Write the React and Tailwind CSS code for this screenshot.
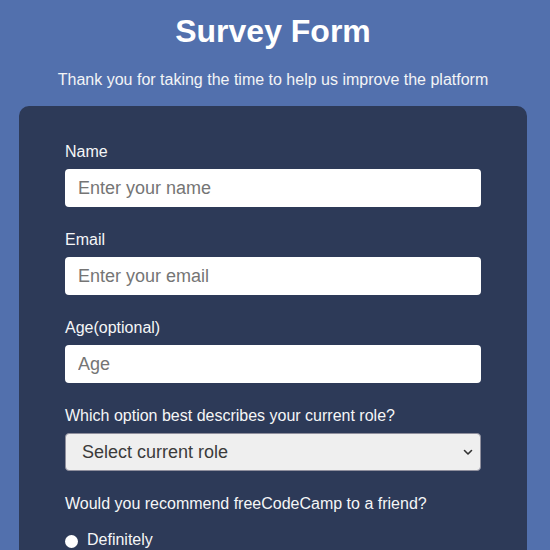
export default function App() {
  return (
    <div className="min-h-[550px] w-full bg-[#5270ad] overflow-hidden" style={{ fontFamily: '"Liberation Sans", Arial, sans-serif' }}>
      <div className="w-[546px]">
        <h1 className="pt-[13px] text-center text-[32px] leading-[37px] font-bold text-white">Survey Form</h1>
        <p className="mt-[21px] text-center text-[16px] leading-[18px] text-[#f3f4f6]">
          Thank you for taking the time to help us improve the platform
        </p>
        <div className="mx-[19px] mt-[17px] rounded-[10px] bg-[#2d3a58] px-[46px] pt-[37px] pb-10">
          <div className="flex flex-col">
            <label className="text-[16px] leading-[18px] text-[#f5f6f7]">Name</label>
            <input
              className="mt-[8px] h-[38px] rounded-[4px] bg-white px-[13px] text-[18px] text-[#333] placeholder:text-[#757575] outline-none"
              placeholder="Enter your name"
            />
          </div>
          <div className="mt-[24px] flex flex-col">
            <label className="text-[16px] leading-[18px] text-[#f5f6f7]">Email</label>
            <input
              className="mt-[8px] h-[38px] rounded-[4px] bg-white px-[13px] text-[18px] text-[#333] placeholder:text-[#757575] outline-none"
              placeholder="Enter your email"
            />
          </div>
          <div className="mt-[24px] flex flex-col">
            <label className="text-[16px] leading-[18px] text-[#f5f6f7]">Age(optional)</label>
            <input
              className="mt-[8px] h-[38px] rounded-[4px] bg-white px-[13px] text-[18px] text-[#333] placeholder:text-[#757575] outline-none"
              placeholder="Age"
            />
          </div>
          <div className="mt-[24px] flex flex-col">
            <label className="text-[16px] leading-[18px] text-[#f5f6f7]">Which option best describes your current role?</label>
            <div className="mt-[8px] flex h-[38px] items-center justify-between rounded-[4px] border border-[#8f8f9d] bg-[#efefef] pl-[16px] pr-[7px]">
              <span className="text-[18px] text-[#3b3b3b]">Select current role</span>
              <svg width="10" height="10" viewBox="0 0 10 10">
                <path d="M1.5 3.5 L5 7 L8.5 3.5" fill="none" stroke="#333" strokeWidth="1.6" strokeLinecap="round" strokeLinejoin="round" />
              </svg>
            </div>
          </div>
          <p className="mt-[24px] text-[16px] leading-[18px] text-[#f5f6f7]">Would you recommend freeCodeCamp to a friend?</p>
          <div className="mt-[18px] flex items-center">
            <span className="mt-[3px] h-[13px] w-[13px] rounded-full bg-white"></span>
            <span className="ml-[9px] text-[16px] leading-[18px] text-[#f5f6f7]">Definitely</span>
          </div>
        </div>
      </div>
    </div>
  );
}
